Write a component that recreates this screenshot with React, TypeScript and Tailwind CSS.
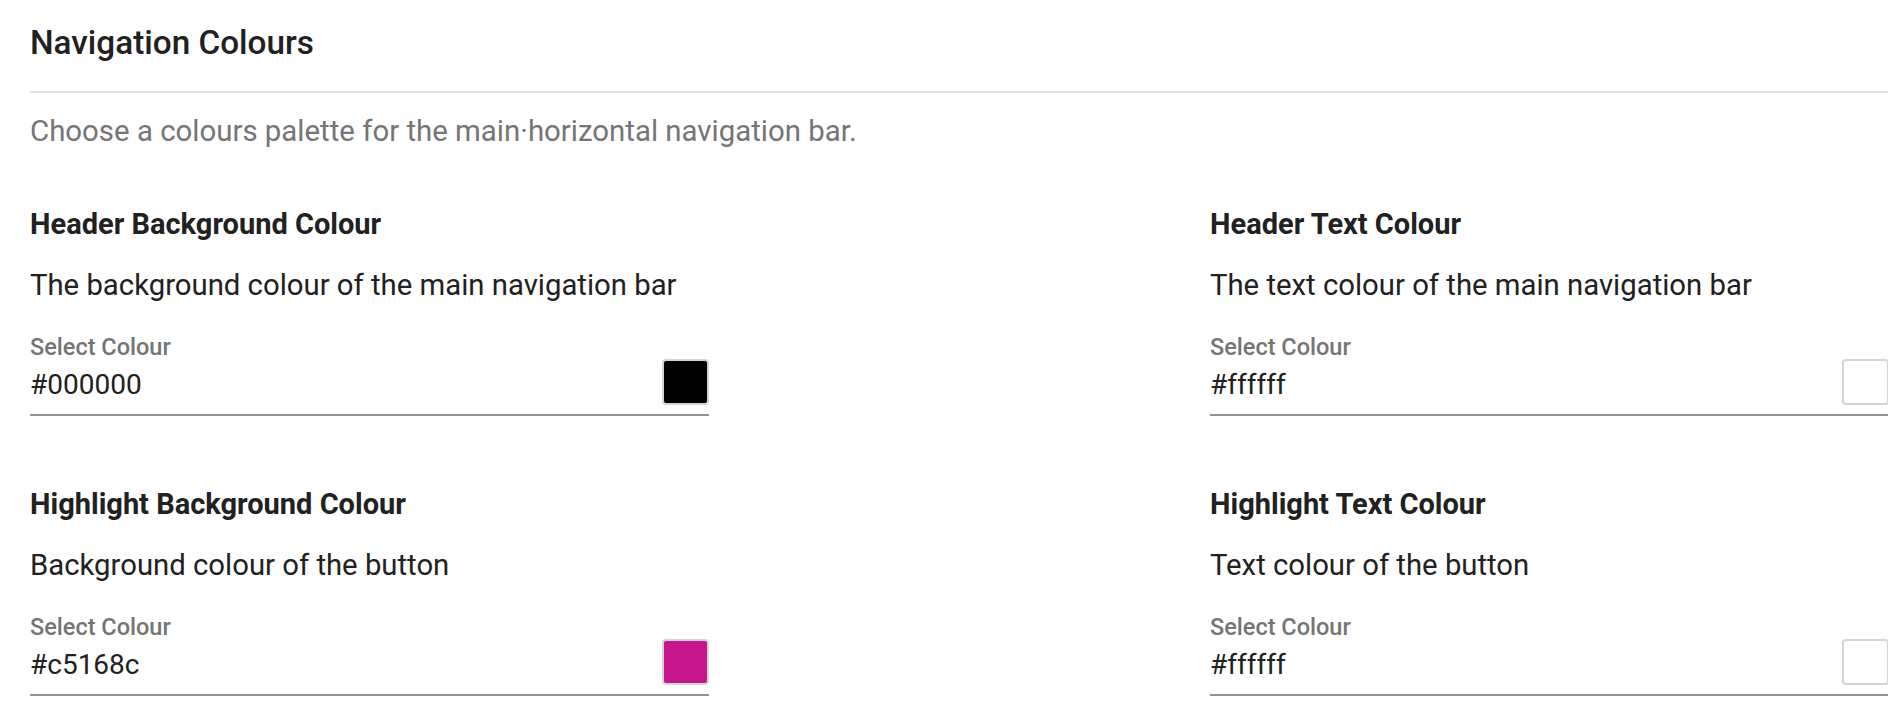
import React from "react";

type Field = {
  title: string;
  desc: string;
  value: string;
  swatch: string;
};

const fields: Field[] = [
  {
    title: "Header Background Colour",
    desc: "The background colour of the main navigation bar",
    value: "#000000",
    swatch: "#000000",
  },
  {
    title: "Header Text Colour",
    desc: "The text colour of the main navigation bar",
    value: "#ffffff",
    swatch: "#ffffff",
  },
  {
    title: "Highlight Background Colour",
    desc: "Background colour of the button",
    value: "#c5168c",
    swatch: "#c5168c",
  },
  {
    title: "Highlight Text Colour",
    desc: "Text colour of the button",
    value: "#ffffff",
    swatch: "#ffffff",
  },
];

function ColourField({ f }: { f: Field }) {
  return (
    <div className="flex flex-col">
      <h3 className="text-[29px] leading-[32px] font-bold text-[#212121]">
        {f.title}
      </h3>
      <p className="mt-[29px] text-[29.3px] leading-[32px] text-[#212121]">
        {f.desc}
      </p>
      <div className="mt-[34px] w-[679px] border-b-2 border-[#949494] pb-[9px]">
        <label className="block text-[23.5px] leading-[24px] font-medium text-[#757575]">
          Select Colour
        </label>
        <div className="flex h-[46px] items-center justify-between">
          <span className="mt-[6px] text-[28px] leading-[34px] text-[#212121]">
            {f.value}
          </span>
          <div
            className="h-[46px] w-[47px] rounded-[4px] border-2 border-[#d4d4d4]"
            style={{ backgroundColor: f.swatch }}
          />
        </div>
      </div>
    </div>
  );
}

export default function App() {
  return (
    <div className="h-[726px] w-[1888px] overflow-hidden bg-white pl-[30px] font-['Roboto',sans-serif]">
      <h2 className="pt-[25px] text-[33.3px] leading-[36px] font-medium text-[#212121]">
        Navigation Colours
      </h2>
      <div className="mt-[30px] h-[2px] bg-[#e0e0e0]" />
      <p className="mt-[22px] text-[29.4px] leading-[32px] text-[#757575]">
        Choose a colours palette for the main·horizontal navigation bar.
      </p>
      <div className="mt-[61px] grid grid-cols-[1180px_1fr] gap-y-[72px]">
        {fields.map((f) => (
          <ColourField key={f.title} f={f} />
        ))}
      </div>
    </div>
  );
}
